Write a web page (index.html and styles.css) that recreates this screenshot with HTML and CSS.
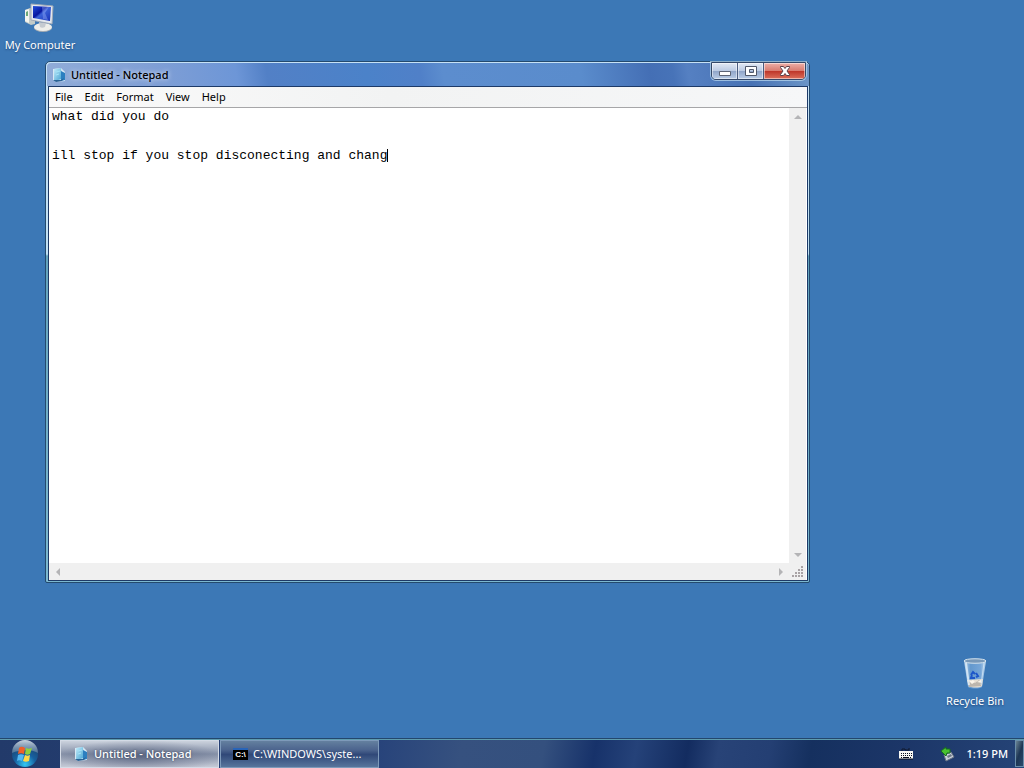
FILE: index.html
```html
<!DOCTYPE html>
<html lang="en">
<head>
  <meta charset="UTF-8" />
  <meta name="viewport" content="width=device-width, initial-scale=1.0"/>
  <title>Untitled - Notepad</title>
  <link rel="stylesheet" href="styles.css">
</head>
<body>

<svg class="defs" width="0" height="0" aria-hidden="true">
  <defs>
    <linearGradient id="screen" x1="0" y1="0" x2="1" y2="1">
      <stop offset="0" stop-color="#2450dc"/>
      <stop offset=".4" stop-color="#0716a0"/>
      <stop offset=".5" stop-color="#3a62d8"/>
      <stop offset="1" stop-color="#1630b8"/>
    </linearGradient>
    <linearGradient id="glass" x1="0" y1="0" x2="1" y2="0">
      <stop offset="0" stop-color="#c8e0f4"/>
      <stop offset=".3" stop-color="#6a9ed2"/>
      <stop offset=".75" stop-color="#80aede"/>
      <stop offset="1" stop-color="#d8eaf8"/>
    </linearGradient>
    <linearGradient id="book" x1="0" y1="0" x2="1" y2="1">
      <stop offset="0" stop-color="#c4edfb"/>
      <stop offset="1" stop-color="#3f9fd0"/>
    </linearGradient>
    <radialGradient id="orb" cx=".5" cy=".9" r=".9">
      <stop offset="0" stop-color="#35c8f4"/>
      <stop offset=".45" stop-color="#17609f"/>
      <stop offset="1" stop-color="#1c3c64"/>
    </radialGradient>
    <linearGradient id="shine" x1="0" y1="0" x2="0" y2="1">
      <stop offset="0" stop-color="#c8d4e0"/>
      <stop offset="1" stop-color="#8098b0" stop-opacity=".5"/>
    </linearGradient>
    <symbol id="notepad" viewBox="0 0 16 16">
      <path d="M2 2l8-1 4 4v9l-9 1-3-2z" fill="#d8e8f4"/>
      <path d="M3 2l7-1 1 11-8 2z" fill="url(#book)"/>
      <path d="M10 4l4 2v7l-4 1z" fill="#2c7fc0"/>
      <path d="M2 13l8 0 3-2-2 3-6 1z" fill="#2a6294"/>
      <path d="M5 5l4-1M5 8l3-1" stroke="#a4e4f8"/>
    </symbol>
  </defs>
</svg>

<main class="desktop">
  <button class="shortcut shortcut-computer" type="button">
    <svg width="32" height="32" viewBox="0 0 32 32" aria-hidden="true">
      <path d="M1 9l5-2 5 2v14l-4 1-6-3z" fill="#c3cbc8"/>
      <path d="M1 9l4-1v14l-4-2z" fill="#f4f4ee"/>
      <path d="M2 11l2-1v5H2z" fill="#6ea878"/>
      <ellipse cx="19" cy="27" rx="9" ry="4" fill="#a5adb4"/>
      <ellipse cx="19" cy="26" rx="9" ry="4" fill="#eeeeea"/>
      <path d="M15 21l7 1-1 4c-2 1-4 1-5 0z" fill="#c5cad0"/>
      <path d="M7 3l22 2-1 18-21-4z" fill="#e4e8ee" stroke="#a2abb8"/>
      <path d="M9 5l18 1-1 14-17-3z" fill="url(#screen)"/>
      <path d="M18 6h7l-4 6 3 7-5-1z" fill="#a8c0ff" opacity=".35"/>
    </svg>
    <span>My Computer</span>
  </button>

  <section class="window" aria-label="Untitled - Notepad">
    <header class="titlebar">
      <svg width="16" height="16" aria-hidden="true"><use href="#notepad"/></svg>
      <h1>Untitled - Notepad</h1>
      <div class="controls">
        <button type="button" aria-label="Minimize">
          <svg width="14" height="12" viewBox="0 0 14 12"><path d="M1.500 6.500h11v4h-11z" fill="#fff" stroke="#5d6475"/></svg>
        </button>
        <button type="button" aria-label="Maximize">
          <svg width="14" height="12" viewBox="0 0 14 12"><path d="M1.500 1.500h11v9h-11zM5.500 4.500v3h4v-3z" fill="#fff" fill-rule="evenodd" stroke="#50586a"/></svg>
        </button>
        <button class="close" type="button" aria-label="Close">
          <svg width="14" height="12" viewBox="0 0 14 12"><path d="M2.500 1.500h3L7 3.500l1.500-2h3v1L9 6l2.500 3.500v1h-3L7 8.500l-1.500 2h-3v-1L5 6 2.500 2.500z" fill="#fff" stroke="#5a4048"/></svg>
        </button>
      </div>
    </header>

    <div class="content">
      <nav class="menu">
        <button type="button">File</button>
        <button type="button">Edit</button>
        <button type="button">Format</button>
        <button type="button">View</button>
        <button type="button">Help</button>
      </nav>

      <div class="editor">
        <div class="page">
          <textarea aria-label="Document text" spellcheck="false" wrap="off">what did you do


ill stop if you stop disconecting and chang</textarea>
          <span class="caret"></span>
        </div>
        <div class="scroll scroll-v">
          <button type="button" aria-label="Scroll up"><svg width="8" height="4" viewBox="0 0 8 4"><path d="M0 4l4-4 4 4z"/></svg></button>
          <button type="button" aria-label="Scroll down"><svg width="8" height="4" viewBox="0 0 8 4"><path d="M0 0h8L4 4z"/></svg></button>
        </div>
        <div class="scroll scroll-h">
          <button type="button" aria-label="Scroll left"><svg width="4" height="8" viewBox="0 0 4 8"><path d="M4 0v8L0 4z"/></svg></button>
          <button type="button" aria-label="Scroll right"><svg width="4" height="8" viewBox="0 0 4 8"><path d="M0 0l4 4-4 4z"/></svg></button>
        </div>
        <div class="grip">
          <svg width="11" height="11" viewBox="0 0 11 11" aria-hidden="true">
            <path d="M9 0h2v2H9zM6 3h2v2H6zM9 3h2v2H9zM3 6h2v2H3zM6 6h2v2H6zM9 6h2v2H9zM0 9h2v2H0zM3 9h2v2H3zM6 9h2v2H6zM9 9h2v2H9z" fill="#a9a3a5"/>
          </svg>
        </div>
      </div>
    </div>
  </section>

  <button class="shortcut shortcut-bin" type="button">
    <svg width="32" height="32" viewBox="0 0 32 32" aria-hidden="true">
      <path d="M5 3l22 0-4 26c-3 2-11 2-14 0z" fill="url(#glass)" opacity=".85"/>
      <path d="M8 22l16-1-1 7c-3 2-10 2-13 0z" fill="#e8dfd2"/>
      <path d="M9 24l4-2 3 3 4-3 3 3-1 3-12 1z" fill="#bdb6ad"/>
      <path d="M10 23l4-1 2 2-3 2zM18 24l4-2 1 3z" fill="#fbf4e8"/>
      <path d="M12 17l2-3 2 2M17 15l2 3-2 1M16 20h-4l1-3" fill="none" stroke="#1d56c9" stroke-width="2"/>
      <path d="M7 5l3 22" stroke="#e2f0fa" stroke-width="2" opacity=".8"/>
      <path d="M25 5l-3 22" stroke="#d3e7f7" opacity=".8"/>
      <path d="M5 3c0-3 22-3 22 0s-22 3-22 0z" fill="#7898b8" stroke="#d6e4ee"/>
    </svg>
    <span>Recycle Bin</span>
  </button>
</main>

<footer class="taskbar">
  <button class="start" type="button" aria-label="Start">
    <svg width="28" height="28" viewBox="0 0 28 28" aria-hidden="true">
      <circle cx="14" cy="14" r="13" fill="url(#orb)"/>
      <path d="M1 13a13 13 0 0 1 26 0c-7-4-19-3-26 0z" fill="url(#shine)"/>
      <path d="M8 8c2-2 4-1 6 0l-1 6c-2-1-4-1-6 0z" fill="#f06028"/>
      <path d="M15 8c2 1 4 1 6 0l-2 6c-2 1-3 1-5 0z" fill="#90d03c"/>
      <path d="M7 15c2-1 4-1 6 0l-2 6c-2-1-4-1-5 0z" fill="#55b8f2"/>
      <path d="M14 15c2 1 3 1 5 0l-1 6c-2 1-4 1-6 0z" fill="#ffd848"/>
    </svg>
  </button>
  <button class="task active" type="button">
    <svg width="16" height="16" aria-hidden="true"><use href="#notepad"/></svg>
    <span>Untitled - Notepad</span>
  </button>
  <button class="task" type="button">
    <span class="console">C:\</span>
    <span>C:\WINDOWS\syste...</span>
  </button>
  <div class="tray">
    <svg width="16" height="16" viewBox="0 0 16 16" aria-label="Keyboard" role="img">
      <path d="M4 5V3h3v1h4V2" fill="none" stroke="#10182c"/>
      <path d="M1 5h14v8H1z" fill="#f8f8f4"/>
      <path d="M1 13h14" stroke="#0a1020"/>
      <path d="M3 7h1v1H3zM5 7h1v1H5zM7 7h1v1H7zM9 7h1v1H9zM11 7h1v1h-1zM13 7h1v1h-1zM3 9h1v1H3zM5 9h1v1H5zM7 9h1v1H7zM9 9h1v1H9zM11 9h1v1h-1zM13 9h1v1h-1zM3 11h1v1H3zM5 11h6v1H5zM12 11h1v1h-1z" fill="#0a1020"/>
    </svg>
    <svg class="device" width="16" height="16" viewBox="0 0 16 16" aria-label="Safely remove hardware" role="img">
      <path d="M4 9l7-3 3 5-8 4z" fill="#c8d0da" stroke="#697484"/>
      <path d="M7 10l4-2 1 2-4 2z" fill="#6b7788"/>
      <path d="M1 5l5-4v2h4v4H7l-1 3z" fill="#48c030" stroke="#176c20"/>
    </svg>
    <time>1:19 PM</time>
    <button class="peek" type="button" aria-label="Show desktop"></button>
  </div>
</footer>

</body>
</html>
```
FILE: styles.css
```css
* {
  box-sizing: border-box;
}
body {
  margin: 0;
  height: 100vh;
  display: flex;
  flex-direction: column;
  overflow: hidden;
  background: #3c78b6;
  font-family: "Noto Sans", "Open Sans", sans-serif;
  font-size: 11px;
  line-height: 16px;
  color: #000;
}
button {
  margin: 0;
  padding: 0;
  border: 0;
  background: none;
  font: inherit;
  color: inherit;
}
svg {
  display: block;
  flex: none;
}
.defs {
  position: absolute;
}

/* desktop */
.desktop {
  position: relative;
  flex: 1;
}
.shortcut {
  position: absolute;
  width: 80px;
  display: flex;
  flex-direction: column;
  align-items: center;
  gap: 4px;
  color: #fff;
  white-space: nowrap;
  text-shadow: 0 1px 2px rgba(0,20,60,0.5);
}
.shortcut-computer {
  left: 0;
  top: 1px;
}
.shortcut-bin {
  right: 9px;
  bottom: 29px;
  gap: 3px;
}

/* notepad window */
.window {
  position: absolute;
  left: 45px;
  top: 61px;
  width: 765px;
  height: 522px;
  display: flex;
  flex-direction: column;
  padding: 1px 1px 1px 2px;
  border: 1px solid #244a6e;
  border-radius: 5px 5px 2px 2px;
  background: linear-gradient(#c6e2f6 0, #c0e0f4 192px, #64a4be 194px, #7cb8d0 100%);
}
.titlebar {
  height: 23px;
  display: flex;
  align-items: center;
  gap: 4px;
  margin: 0 -1px;
  padding-left: 4px;
  border-radius: 4px 4px 0 0;
  background: linear-gradient(80deg, #90acd8 0%, #809fd5 14%, #6d96d7 25%, #5280c6 29%, #4b82c9 42%, #5080c8 49%, #5c8dce 52%, #5a8ccc 70%, #446fb5 79%, #4773b8 82%, #5580c2 84%, #4772b4 92%, #6d97c8 100%);
}
.titlebar h1 {
  margin: 0;
  flex: 1;
  font-size: 11px;
  font-weight: 500;
  text-shadow: 0 0 5px rgba(255,255,255,0.9);
}
.controls {
  align-self: flex-start;
  display: flex;
  margin: -1px 3px 0 0;
  border: 1px solid #344868;
  border-radius: 0 0 5px 5px;
  box-shadow: 0 0 0 1px rgba(190,220,240,0.7);
  overflow: hidden;
}
.controls button {
  width: 26px;
  height: 16px;
  display: flex;
  align-items: center;
  justify-content: center;
  border-right: 1px solid #4a5c80;
  background: linear-gradient(#e2e9f4, #bccbe3 48%, #8fa4c8 50%, #b9cce6);
  box-shadow: inset 0 0 0 1px rgba(255,255,255,0.5);
}
.controls .close {
  width: 41px;
  border-right: 0;
  background: linear-gradient(#edb0a8, #d97c70 48%, #bd3428 50%, #dc705c);
}
.content {
  flex: 1;
  min-height: 0;
  display: flex;
  flex-direction: column;
  border: 1px solid #1d3a68;
  background: #fff;
}
.menu {
  height: 21px;
  display: flex;
  align-items: center;
  padding-bottom: 1px;
  border-bottom: 1px solid #a6a6a8;
  background: linear-gradient(90deg, #fafafa, #f2f3f3 45%, #f6f7f8);
}
.menu button {
  padding: 0 6px;
}
.editor {
  flex: 1;
  min-height: 0;
  display: grid;
  grid-template-columns: 1fr 17px;
  grid-template-rows: 1fr 17px;
  padding-right: 1px;
}
.page {
  position: relative;
  font-family: "Liberation Mono", monospace;
  font-size: 13px;
  line-height: 13px;
}
.page textarea {
  display: block;
  width: 100%;
  height: 100%;
  padding: 2px 3px;
  border: 0;
  outline: 0;
  resize: none;
  overflow: hidden;
  background: #fff;
  color: #000;
  font: inherit;
}
/* sits after the 43rd character of the fourth line */
.caret {
  position: absolute;
  left: calc(3px + 43ch);
  top: 41px;
  width: 1px;
  height: 13px;
  background: #000;
}
.scroll {
  display: flex;
  justify-content: space-between;
  background: #f0f0f0;
}
.scroll svg {
  fill: #b4b4b6;
}
.scroll button {
  width: 17px;
  height: 17px;
  display: flex;
  align-items: center;
  justify-content: center;
}
.scroll-v {
  flex-direction: column;
}
.grip {
  display: flex;
  align-items: center;
  justify-content: center;
  background: #f0f0f0;
}

/* taskbar */
.taskbar {
  height: 30px;
  display: flex;
  align-items: stretch;
  border-top: 1px solid #23476c;
  box-shadow: inset 0 1px #5f9cae;
  padding-top: 1px;
  background: linear-gradient(100deg, #223a6a 0%, #26427a 36%, #36517f 45%, #34507e 53%, #17326a 58%, #254279 62%, #132c60 67%, #284377 70%, #243f73 75%, #15305f 79%, #1c3668 88%, #254477 100%);
  color: #fff;
}
.start {
  width: 60px;
  padding-left: 11px;
}
.task {
  width: 159px;
  display: flex;
  align-items: center;
  gap: 5px;
  margin-right: 1px;
  padding: 0 0 1px 12px;
  border: 1px solid #7e9aba;
  background: linear-gradient(#64809f, #4b638d 35%, #304878 52%, #58759c);
  white-space: nowrap;
}
.task.active {
  border-color: #d4dbe6;
  background: radial-gradient(ellipse at 50% 60%, rgba(60,72,104,0.6), rgba(120,135,165,0) 75%), linear-gradient(#cbd2dd, #8792a9 50%, #c5cad6);
  font-weight: 500;
  text-shadow: 0 0 2px #34405a;
}
.console {
  width: 15px;
  height: 12px;
  border-top: 2px solid #2864b8;
  background: #000;
  font-family: "Liberation Sans", sans-serif;
  font-size: 8px;
  font-weight: 700;
  line-height: 10px;
}
.tray {
  display: flex;
  align-items: center;
  margin-left: auto;
  padding-bottom: 1px;
  font-weight: 500;
}
.device {
  margin: 0 10px 0 26px;
}
.peek {
  align-self: stretch;
  width: 9px;
  margin-left: 7px;
  border: 1px solid #6a8eaa;
  background: linear-gradient(110deg, #6a8494, #1d3654 50%, #2a4a6c);
}
```
